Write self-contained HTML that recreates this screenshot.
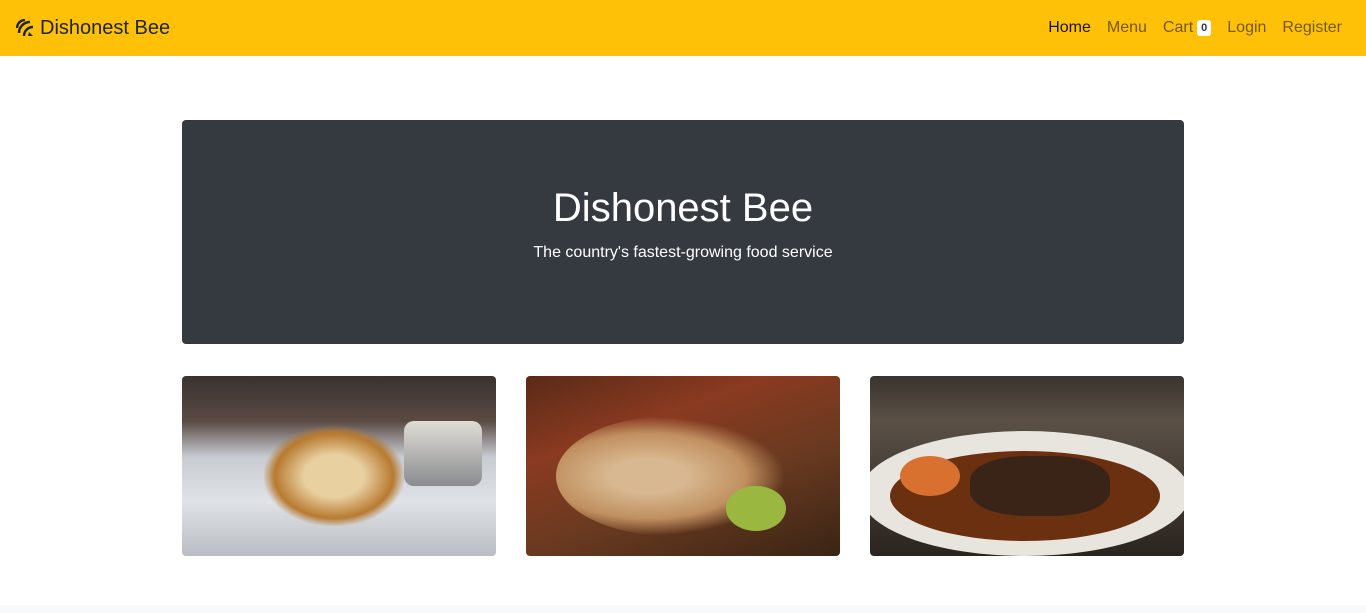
<!DOCTYPE html>
<html><head><meta charset="utf-8"><style>
*{box-sizing:border-box;margin:0;padding:0}
body{width:1366px;height:613px;overflow:hidden;background:#fff;font-family:"Liberation Sans",sans-serif;position:relative}
nav{position:absolute;left:0;top:0;width:1366px;height:56px;background:#ffc107}
.brand{position:absolute;left:16px;top:16px;font-size:20px;color:#212529;line-height:24px;display:flex;align-items:center}
.brand svg{margin-right:6px}
.links{position:absolute;right:24px;top:18px;font-size:16px;line-height:20px;display:flex}
.links span{margin-left:16px;color:rgba(0,0,0,.55)}
.links span.a{color:rgba(0,0,0,.9)}
.badge{display:inline-block;background:#fff;color:#343a40;font-size:11px;font-weight:bold;border-radius:3px;padding:2px 4px;line-height:12px;vertical-align:1px;margin-left:4px}
.hero{position:absolute;left:182px;top:120px;width:1002px;height:224px;background:#343a40;border-radius:4px;color:#fff;text-align:center}
.hero h1{font-weight:normal;font-size:40px;line-height:48px;margin-top:64px}
.hero p{font-size:16px;margin-top:12px}
.img{position:absolute;top:376px;width:314px;height:180px;border-radius:4px;overflow:hidden}
footer{position:absolute;left:0;top:605px;width:1366px;height:8px;background:#f8f9fa}
</style></head><body>
<nav>
<div class="brand"><svg width="18" height="18" viewBox="0 0 18 18"><g fill="none" stroke="#212529" stroke-width="2.4"><path d="M1 9 A8 8 0 0 1 9 1"/><path d="M3 14 A11 11 0 0 1 14 3"/><path d="M8 17 A9 9 0 0 1 17 8"/></g><path d="M13 13 L17 17 L12 17Z" fill="#212529"/></svg>Dishonest Bee</div>
<div class="links"><span class="a">Home</span><span>Menu</span><span>Cart<span class="badge" style="margin-left:4px;color:#343a40">0</span></span><span>Login</span><span>Register</span></div>
</nav>
<div class="hero"><h1>Dishonest Bee</h1><p>The country's fastest-growing food service</p></div>
<div class="img" style="left:182px;background:linear-gradient(180deg,#3a3230 0%,#5a4a44 25%,#c8ccd2 45%,#dfe2e6 70%,#b9bcc2 100%)">
<div style="position:absolute;left:82px;top:50px;width:140px;height:100px;border-radius:50%/30%;background:radial-gradient(ellipse,#e8d0a0 30%,#b87a30 60%,transparent 72%)"></div>
<div style="position:absolute;left:222px;top:45px;width:78px;height:65px;border-radius:10px;background:linear-gradient(#e0ddd6,#8a8c90)"></div>
</div>
<div class="img" style="left:526px;background:linear-gradient(160deg,#5a2a18 0%,#8a3a20 30%,#6a3a20 60%,#3a2414 100%)">
<div style="position:absolute;left:30px;top:40px;width:230px;height:120px;border-radius:50%;background:radial-gradient(ellipse at 40% 50%,#d8b890 20%,#c09060 50%,transparent 70%)"></div>
<div style="position:absolute;left:200px;top:110px;width:60px;height:45px;border-radius:50%;background:#9ab840"></div>
</div>
<div class="img" style="left:870px;background:linear-gradient(180deg,#3a342e 0%,#5a5046 25%,#2a2420 100%)">
<div style="position:absolute;left:-10px;top:55px;width:330px;height:125px;border-radius:50%;background:#e8e4de"></div>
<div style="position:absolute;left:20px;top:75px;width:270px;height:90px;border-radius:50%;background:#6a3010"></div>
<div style="position:absolute;left:100px;top:80px;width:140px;height:60px;border-radius:40%;background:#3a2418"></div>
<div style="position:absolute;left:30px;top:80px;width:60px;height:40px;border-radius:50%;background:#d87030"></div>
</div>
<footer></footer>
</body></html>
